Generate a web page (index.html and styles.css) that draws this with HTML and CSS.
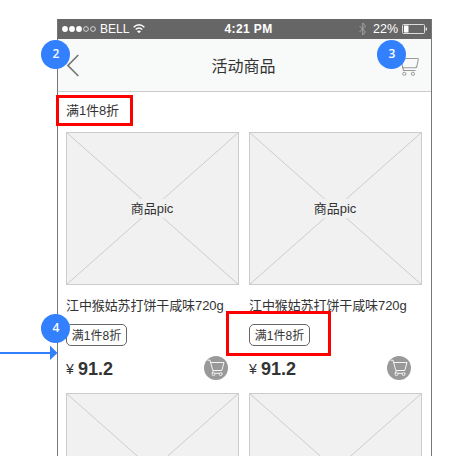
FILE: index.html
```
<!DOCTYPE html>
<html lang="zh-CN">
<head>
<meta charset="utf-8">
<title>活动商品</title>
<link rel="stylesheet" href="styles.css">
</head>
<body>
<svg class="defs" width="0" height="0">
  <symbol id="cross" viewBox="0 0 173 153"><path d="M0 0L173 153M173 0L0 153" fill="none" stroke="#ccc"/></symbol>
  <symbol id="cart" viewBox="0 0 24 24"><circle cx="12" cy="12" r="12" fill="#999"/><path d="M3.500 4.200H6L8.800 14.500H17.800L20 6.500H6.700M9.500 14.500L8 17.300H18.500" fill="none" stroke="#fff" stroke-width=".9"/><circle cx="9.500" cy="18.200" r="1.400" fill="#999" stroke="#fff" stroke-width=".8"/><circle cx="16.600" cy="18.200" r="1.400" fill="#999" stroke="#fff" stroke-width=".8"/></symbol>
</svg>
<main class="phone">
  <div class="status">
    <div class="carrier">
      <svg width="34" height="20" viewBox="0 0 34 20"><g fill="#fff"><circle cx="3" cy="10" r="2.900"/><circle cx="10" cy="10" r="2.900"/><circle cx="17" cy="10" r="2.900"/></g><g fill="none" stroke="#fff" stroke-width=".7"><circle cx="24" cy="10" r="2.400"/><circle cx="31" cy="10" r="2.400"/></g></svg>
      <span class="bell">BELL</span>
      <svg width="12" height="20" viewBox="0 0 12 20"><path d="M.6 8.2Q6 3.300 11.400 8.200M2.700 10.500Q6 7.500 9.300 10.500" fill="none" stroke="#fff" stroke-width="1.500"/><path d="M4 12.200Q6 10.600 8 12.200L6 14.300z" fill="#fff"/></svg>
    </div>
    <span class="time">4:21 PM</span>
    <div class="power">
      <svg width="8" height="20" viewBox="0 0 8 20"><path d="M.5 7L6.500 13L3.700 16V4L6.500 7L.5 13" fill="none" stroke="#aaa" stroke-width=".9"/></svg>
      <span class="percent">22%</span>
      <svg width="26" height="20" viewBox="0 0 26 20"><rect x=".5" y="5.500" width="22" height="9" rx="1" fill="none" stroke="#ddd"/><path d="M2 6.500h4.500v7H2z" fill="#fff"/><path d="M24 8.500q1.500 1.500 0 3z" fill="#fff" stroke="#fff" stroke-width=".6"/></svg>
    </div>
  </div>
  <header class="bar">
    <svg class="back" width="12" height="23" viewBox="0 0 12 23"><path d="M11.300 1L1 11.500L11.300 22" fill="none" stroke="#777" stroke-width="1.700"/></svg>
    <h1>活动商品</h1>
    <svg class="basket" width="22" height="20" viewBox="0 0 22 20"><path d="M0 1h3.500l3 12.500h12M5 1.500h15.500q1 0 .8 1l-1.500 7q-.3 1.200-1.500 1.200H5" fill="none" stroke="#999" stroke-width="1.100"/><circle cx="7.300" cy="16.800" r="1.600" fill="none" stroke="#999"/><circle cx="15.900" cy="16.800" r="1.600" fill="none" stroke="#999"/></svg>
  </header>
  <p class="promo">满1件8折</p>
  <section class="grid">
    <article>
      <div class="pic"><svg class="cross"><use href="#cross"/></svg><span>商品pic</span></div>
      <h2>江中猴姑苏打饼干咸味720g</h2>
      <div class="tag">满1件8折</div>
      <div class="buy"><span class="yen">¥</span><b>91.2</b><svg class="add"><use href="#cart"/></svg></div>
    </article>
    <article>
      <div class="pic"><svg class="cross"><use href="#cross"/></svg><span>商品pic</span></div>
      <h2>江中猴姑苏打饼干咸味720g</h2>
      <div class="tag">满1件8折</div>
      <div class="buy"><span class="yen">¥</span><b>91.2</b><svg class="add"><use href="#cart"/></svg></div>
    </article>
    <article><div class="pic"><svg class="cross"><use href="#cross"/></svg></div></article>
    <article><div class="pic"><svg class="cross"><use href="#cross"/></svg></div></article>
  </section>
</main>
<div class="mark mark-promo"></div>
<div class="mark mark-tag"></div>
<svg class="arrow" width="58" height="15" viewBox="0 0 58 15"><path d="M0 7h51v2H0zM50 .5l7.500 7.500L50 15z" fill="#3380ff"/></svg>
<div class="note note-2">2</div>
<div class="note note-3">3</div>
<div class="note note-4">4</div>
</body>
</html>
```
FILE: styles.css
```
* { box-sizing: border-box; margin: 0; }
body {
  position: relative;
  width: 449px;
  height: 462px;
  padding: 19px 0 0 57px;
  overflow: hidden;
  background: #fff;
  color: #333;
  font: 13px/20px "Liberation Sans", "Noto Sans CJK SC", sans-serif;
}
svg { display: block; flex: none; }
.defs { position: absolute; }
.phone {
  width: 375px;
  height: 437px;
  overflow: hidden;
  border: solid #777;
  border-width: 0 1px;
}
.status {
  display: grid;
  grid-template-columns: 1fr auto 1fr;
  height: 20px;
  margin: 0 -1px;
  padding: 0 4px 0 5px;
  background: #666;
  color: #fff;
}
.carrier, .power { display: flex; }
.bell { width: 29px; margin: 0 4px; font-size: 12px; }
.time { padding-left: 7px; font-size: 12px; font-weight: bold; letter-spacing: .4px; }
.power { justify-content: flex-end; }
.percent { width: 25px; margin: 0 4px 0 6px; font-size: 12.500px; }
.bar {
  display: flex;
  align-items: center;
  justify-content: space-between;
  height: 53px;
  padding: 0 12px 0 9px;
  border-bottom: 1px solid #ccc;
  background: #f8faf9;
}
.bar h1 { margin: 3px 0 0 11px; font-size: 16px; font-weight: normal; line-height: 24px; }
.back { margin-top: 1px; }
.basket { margin-top: 3px; }
.promo { height: 40px; padding: 9px 8px 0; letter-spacing: -.1px; }
.grid {
  display: grid;
  grid-template-columns: 173px 173px;
  column-gap: 10px;
  row-gap: 13px;
  padding-left: 8px;
}
.pic {
  display: flex;
  align-items: center;
  justify-content: center;
  position: relative;
  height: 153px;
  border: 1px solid #ccc;
  background: #f1f1f1;
}
.cross { position: absolute; top: -1px; left: -1px; width: 173px; height: 153px; }
.pic span { position: relative; padding-right: 1px; background: #f1f1f1; line-height: 19px; }
h2 {
  height: 20px;
  margin-top: 11px;
  font-size: 13px;
  font-weight: normal;
  letter-spacing: -.1px;
  white-space: nowrap;
}
.tag {
  width: 61px;
  height: 22px;
  margin-top: 8px;
  border: 1px solid #666;
  border-radius: 5px;
  font-size: 12px;
  line-height: 22px;
  text-align: center;
  white-space: nowrap;
}
.buy { display: flex; align-items: center; height: 24px; margin: 10px 11px 0 0; }
.yen { width: 12px; padding-top: 1px; font-size: 14px; }
.buy b { padding-top: 2px; font-size: 18px; }
.add { width: 24px; height: 24px; margin-left: auto; }
.mark { position: absolute; border: 3px solid #f00; }
.mark-promo { left: 56px; top: 95px; width: 77px; height: 31px; }
.mark-tag { left: 226px; top: 311px; width: 105px; height: 45px; }
.arrow { position: absolute; left: 0; top: 345px; }
.note {
  position: absolute;
  width: 29px;
  height: 29px;
  border-radius: 50%;
  background: #3380ff;
  color: #fff;
  font: 600 12px/28px "Open Sans", sans-serif;
  text-align: center;
  padding-left: 1px;
}
.note-2 { left: 41px; top: 40px; }
.note-3 { left: 377px; top: 40px; }
.note-4 { left: 41px; top: 314px; }
```
